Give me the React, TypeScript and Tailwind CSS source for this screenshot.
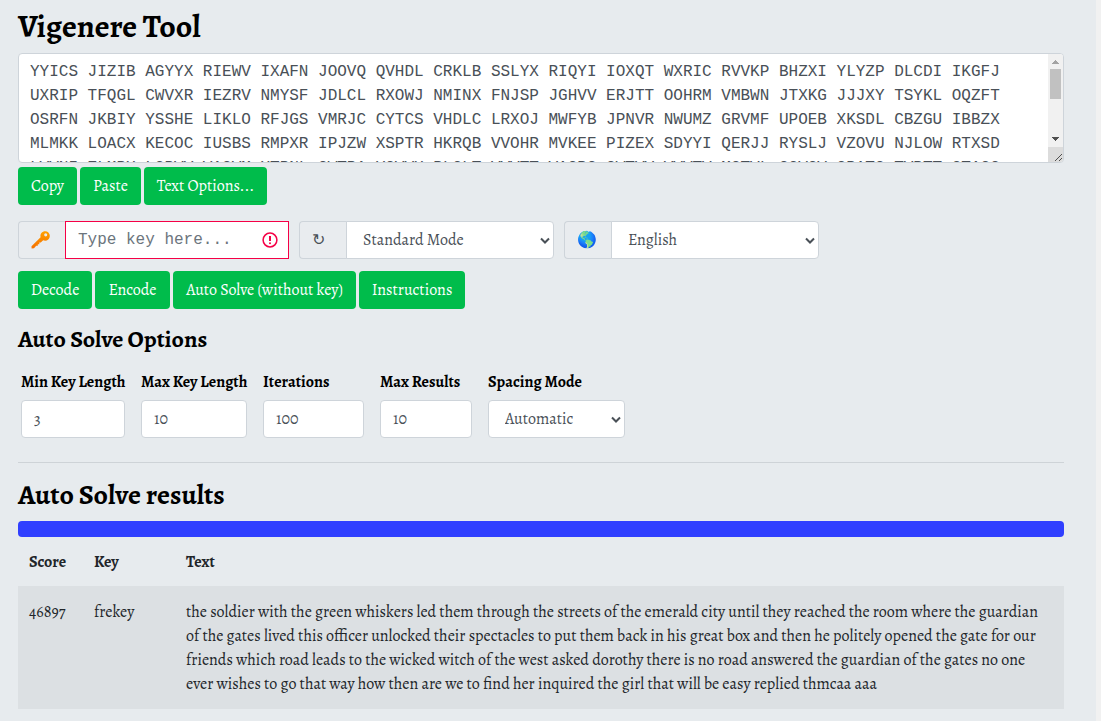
import React, { useState } from "react";

const CIPHER_TEXT = [
  "YYICS JIZIB AGYYX RIEWV IXAFN JOOVQ QVHDL CRKLB SSLYX RIQYI IOXQT WXRIC RVVKP BHZXI YLYZP DLCDI IKGFJ",
  "UXRIP TFQGL CWVXR IEZRV NMYSF JDLCL RXOWJ NMINX FNJSP JGHVV ERJTT OOHRM VMBWN JTXKG JJJXY TSYKL OQZFT",
  "OSRFN JKBIY YSSHE LIKLO RFJGS VMRJC CYTCS VHDLC LRXOJ MWFYB JPNVR NWUMZ GRVMF UPOEB XKSDL CBZGU IBBZX",
  "MLMKK LOACX KECOC IUSBS RMPXR IPJZW XSPTR HKRQB VVOHR MVKEE PIZEX SDYYI QERJJ RYSLJ VZOVU NJLOW RTXSD",
  "LVVNI ZLMPX LGPVV VAGVM XTPNL CWTPA YGVVX PLGLT VVVTT VAGPG CWTVV VVVTV MGTVL GGVGV GPATG TVPTT GTAGG",
].join(" ");

const RESULTS = [
  {
    score: 46897,
    key: "frekey",
    text: "the soldier with the green whiskers led them through the streets of the emerald city until they reached the room where the guardian of the gates lived this officer unlocked their spectacles to put them back in his great box and then he politely opened the gate for our friends which road leads to the wicked witch of the west asked dorothy there is no road answered the guardian of the gates no one ever wishes to go that way how then are we to find her inquired the girl that will be easy replied thmcaa aaa",
  },
];

const CONTROL = "h-[38px] border border-[#ced4da] bg-white text-[#495057] outline-none";

function Button({ children, width }: { children: React.ReactNode; width: string }) {
  return (
    <button type="button" className={`h-[38px] rounded bg-[#00bc4b] text-center whitespace-nowrap text-white ${width}`}>
      {children}
    </button>
  );
}

function Select({ id, options, className }: { id: string; options: string[]; className: string }) {
  return (
    <div className={`relative ${className}`}>
      <select id={id} className={`w-full appearance-none rounded-[inherit] pr-6 pl-4 ${CONTROL}`}>
        {options.map((o) => (
          <option key={o}>{o}</option>
        ))}
      </select>
      <svg viewBox="0 0 10 8" className="pointer-events-none absolute top-4 right-1 h-2 w-[10px]" fill="none" stroke="#495057" strokeWidth="2">
        <path d="M1 1.5 5 5.5 9 1.5" />
      </svg>
    </div>
  );
}

function Addon({ htmlFor, label, children }: { htmlFor: string; label: string; children: React.ReactNode }) {
  return (
    <label htmlFor={htmlFor} aria-label={label} className="flex h-[38px] w-12 shrink-0 items-center rounded-l border border-r-0 border-[#ced4da] bg-[#e9ecef] pl-3 text-[#495057]">
      {children}
    </label>
  );
}

function KeyIcon() {
  return (
    <svg viewBox="0 0 20 20" className="size-5">
      <defs>
        <linearGradient id="key-fill" x1="0" y1="0" x2="0" y2="1">
          <stop offset="0" stopColor="#ffa000" />
          <stop offset="1" stopColor="#f57000" />
        </linearGradient>
      </defs>
      <path
        fill="url(#key-fill)"
        fillRule="evenodd"
        d="M10.4 3.1C12 1 15.4.6 17.4 2.4c2 1.900 1.900 5.300-.1 7.100-1.500 1.300-3.500 1.500-5.100.8L9.700 12.600H8.300v1.600H6.800v1.500H5.200L3 18.300.6 18.500.5 16.200 9.600 7.300C9.200 5.900 9.400 4.300 10.400 3.100ZM14.700 3.300a1.500 1.500 0 1 0 0 3.100 1.500 1.500 0 0 0 0-3.100Z"
      />
    </svg>
  );
}

function ScrollTrack() {
  return (
    <svg viewBox="0 0 15 108" aria-hidden="true" className="pointer-events-none absolute top-px right-px h-[108px] w-[15px] rounded-r-[3px]" shapeRendering="crispEdges">
      <path fill="#f1f1f1" d="M0 0h15v93H0z" />
      <path fill="#dcdcdc" d="M0 93h15v15H0z" />
      <path fill="#c1c1c1" d="M2 15h11v30H2z" />
      <path fill="#a3a3a3" d="M7 6h1v1h1v1h1v1h1v1H4V9h1V8h1V7h1z" />
      <path fill="#505050" d="M4 83h7v1h-1v1H9v1H8v1H7v-1H6v-1H5v-1H4z" />
      <path stroke="#505050" shapeRendering="auto" d="m7 107 7-7M11 107l3-3" />
    </svg>
  );
}

function NumberField({ id, label, value, width }: { id: string; label: string; value: string; width: string }) {
  const [current, setCurrent] = useState(value);
  return (
    <div className={`flex flex-col gap-[6px] ${width}`}>
      <label htmlFor={id} className="font-bold whitespace-nowrap text-black">{label}</label>
      <input id={id} inputMode="numeric" value={current} onChange={(e) => setCurrent(e.target.value)} className={`w-full rounded px-3 ${CONTROL}`} />
    </div>
  );
}

export default function App() {
  return (
    <div className="min-h-screen border-r-[5px] border-[#f1f1f1] bg-[#e7ebee] font-['Alegreya','Liberation_Serif',serif] text-base text-[#212529]">
      <main className="pt-[7px] pr-8 pb-3 pl-[18px]">
        <h1 className="text-[32px] leading-[38px] font-bold text-black">Vigenere Tool</h1>

        <div className="relative mt-2">
          <textarea
            aria-label="Text"
            defaultValue={CIPHER_TEXT}
            spellCheck={false}
            className="block h-[110px] w-full resize-none overflow-hidden rounded border border-[#ced4da] bg-white py-1.5 pr-[27px] pl-[11px] font-['Liberation_Mono',monospace] leading-6 text-[#495057] outline-none"
          />
          <ScrollTrack />
        </div>
        <div className="mt-1 flex flex-wrap gap-[3px]">
          <Button width="w-[59px]">Copy</Button>
          <Button width="w-[61px]">Paste</Button>
          <Button width="w-[123px]">Text Options...</Button>
        </div>

        <div className="mt-4 flex flex-wrap gap-[10px]">
          <div className="flex w-[271px]">
            <Addon htmlFor="key" label="Key">
              <KeyIcon />
            </Addon>
            <div className="relative -ml-px flex-1">
              <input id="key" placeholder="Type key here..." className="h-[38px] w-full border border-[#f50046] bg-white pr-10 pl-3 font-['Liberation_Mono',monospace] text-[#495057] outline-none placeholder:text-[#6c757d]" />
              <svg viewBox="0 0 16 16" className="pointer-events-none absolute top-[11px] right-[11px] size-4" fill="none" stroke="#f50046">
                <circle cx="8" cy="8" r="6.9" strokeWidth="1.5" />
                <path d="M8 4v5" strokeWidth="2" />
                <circle cx="8" cy="11.3" r="1" fill="#f50046" stroke="none" />
              </svg>
            </div>
          </div>
          <div className="flex w-[255px]">
            <Addon htmlFor="mode" label="Mode">↻</Addon>
            <Select id="mode" options={["Standard Mode", "Autokey Mode"]} className="-ml-px flex-1 rounded-r" />
          </div>
          <div className="flex w-[255px]">
            <Addon htmlFor="language" label="Language">
              <span className="font-['Noto_Color_Emoji']">🌎</span>
            </Addon>
            <Select id="language" options={["English", "German", "French"]} className="-ml-px flex-1 rounded-r" />
          </div>
        </div>

        <div className="mt-3 flex flex-wrap gap-x-[3px] gap-y-1">
          <Button width="w-[74px]">Decode</Button>
          <Button width="w-[75px]">Encode</Button>
          <Button width="w-[183px]">Auto Solve (without key)</Button>
          <Button width="w-[106px]">Instructions</Button>
        </div>

        <h3 className="mt-4 text-2xl leading-7 font-bold text-black">Auto Solve Options</h3>
        <div className="mt-[17px] ml-[3px] flex flex-wrap gap-4">
          <NumberField id="min-length" label="Min Key Length" value="3" width="w-[104px]" />
          <NumberField id="max-length" label="Max Key Length" value="10" width="w-[106px]" />
          <NumberField id="iterations" label="Iterations" value="100" width="w-[101px]" />
          <NumberField id="max-results" label="Max Results" value="10" width="w-[92px]" />
          <div className="flex w-[137px] flex-col gap-[6px]">
            <label htmlFor="spacing" className="font-bold text-black">Spacing Mode</label>
            <Select id="spacing" options={["Automatic", "Original"]} className="rounded" />
          </div>
        </div>

        <hr className="mt-6 border-[#ced3d7]" />

        <h2 className="mt-[15px] text-[28px] leading-[34px] font-bold text-black">Auto Solve results</h2>
        <div role="progressbar" aria-label="Progress" aria-valuenow={100} className="mt-[9px] h-4 rounded bg-[#303fff]" />
        <table className="w-full text-left leading-6">
          <thead>
            <tr>
              <th className="w-16 px-[11px] pt-[13px] pb-3 font-bold">Score</th>
              <th className="w-[92px] px-3 pt-[13px] pb-3 font-bold">Key</th>
              <th className="px-3 pt-[13px] pb-3 font-bold">Text</th>
            </tr>
          </thead>
          <tbody>
            {RESULTS.map((r) => (
              <tr key={r.key} className="bg-[#dce0e3] align-top">
                <td className="px-[11px] pt-[14px] pb-[13px]">{r.score}</td>
                <td className="px-3 pt-[14px] pb-[13px]">{r.key}</td>
                <td className="px-3 pt-[14px] pb-[13px]">{r.text}</td>
              </tr>
            ))}
          </tbody>
        </table>
      </main>
    </div>
  );
}
